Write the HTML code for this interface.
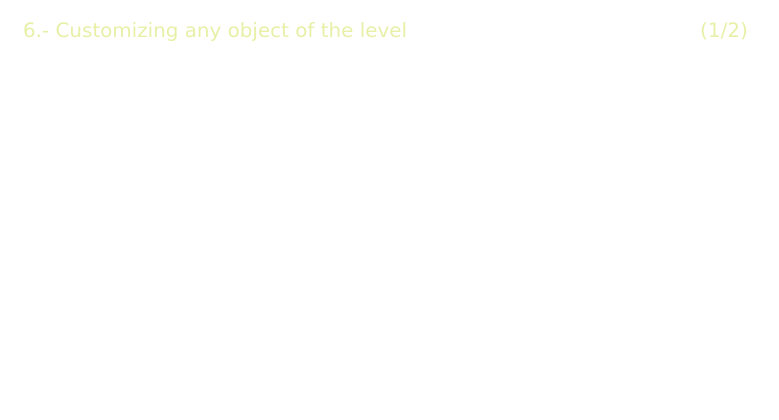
<!DOCTYPE html>
<html><head><style>
html,body{margin:0;padding:0;background:#fff;width:779px;height:420px;overflow:hidden}
.t{position:absolute;top:19.5px;font-family:"DejaVu Sans",sans-serif;font-size:19.9px;line-height:22px;color:#e8f0a8;white-space:nowrap}
</style></head><body>
<div class="t" style="left:23px;letter-spacing:0px">6.- Customizing any object of the level</div>
<div class="t" style="right:31px;letter-spacing:0.1px">(1/2)</div>
</body></html>
